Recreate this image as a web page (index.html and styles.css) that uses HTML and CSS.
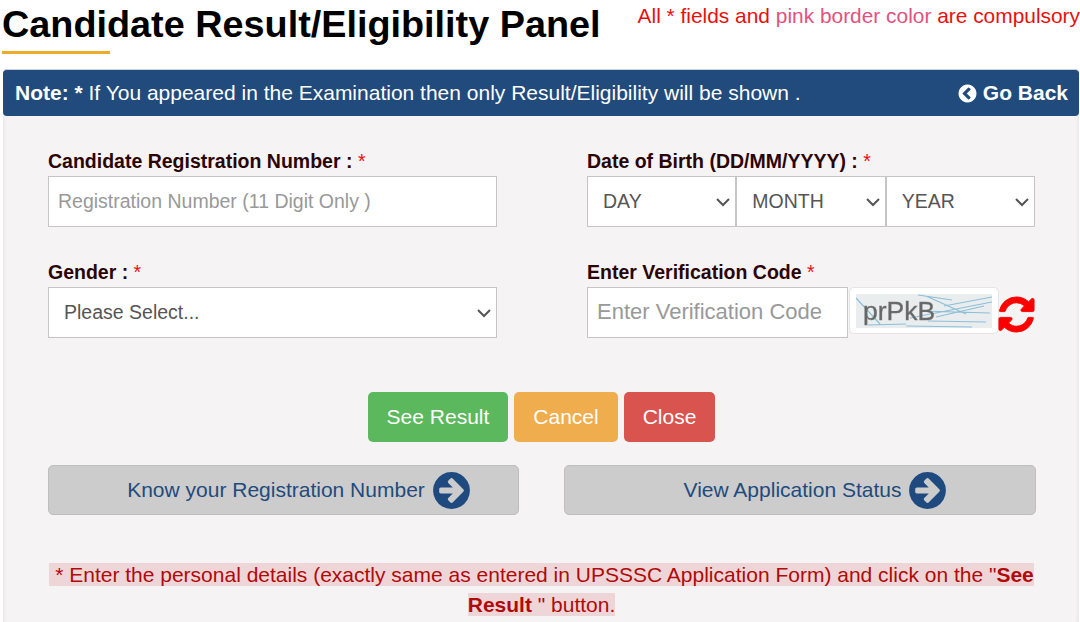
FILE: index.html
```html
<!DOCTYPE html>
<html>
<head>
    <title>Candidate Result/Eligibility Panel</title>
    <link rel="stylesheet" href="styles.css">
</head>
<body>
    <header class="page-head">
        <div class="title-block">
            <h1>Candidate Result/Eligibility Panel</h1>
            <div class="title-line"></div>
        </div>
        <p class="compulsory">All * fields and <span class="pink">pink border color</span> are compulsory</p>
    </header>

    <main class="panel">
        <div class="panel-head">
            <p><b>Note: *</b> If You appeared in the Examination then only Result/Eligibility will be shown .</p>
            <a href="#" class="go-back">
                <svg class="back-icon" viewBox="0 0 1792 1792"><path d="M1037 1395l102-102q19-19 19-45t-19-45l-307-307 307-307q19-19 19-45t-19-45l-102-102q-19-19-45-19t-45 19l-454 454q-19 19-19 45t19 45l454 454q19 19 45 19t45-19zm627-499q0 209-103 385.5t-279.5 279.5-385.5 103-385.5-103-279.5-279.5-103-385.5 103-385.5 279.5-279.5 385.5-103 385.5 103 279.5 279.5 103 385.5z"/></svg>
                Go Back
            </a>
        </div>

        <div class="panel-body">
            <div class="form-grid">
                <div class="field">
                    <label>Candidate Registration Number : <span class="req">*</span></label>
                    <input type="text" class="control" placeholder="Registration Number (11 Digit Only )">
                </div>
                <div class="field">
                    <label>Date of Birth (DD/MM/YYYY) : <span class="req">*</span></label>
                    <div class="dob">
                        <select class="control"><option>DAY</option></select>
                        <select class="control"><option>MONTH</option></select>
                        <select class="control"><option>YEAR</option></select>
                    </div>
                </div>
                <div class="field">
                    <label>Gender : <span class="req">*</span></label>
                    <select class="control"><option>Please Select...</option></select>
                </div>
                <div class="field">
                    <label>Enter Verification Code <span class="req">*</span></label>
                    <div class="captcha-row">
                        <input type="text" class="control code-input" placeholder="Enter Verification Code">
                        <div class="captcha">
                            <svg class="captcha-img" viewBox="0 0 136 34">
                                <rect width="136" height="34" fill="#e9edee"/>
                                <g stroke="#8dbfd8" stroke-width="1.2" fill="none">
                                    <path d="M0 4L24 30M62 1L96 6M54 24L136 8M50 32L116 33M72 27L130 28M88 12L136 3M66 17L134 19M80 23L128 12M70 2L110 20M12 31L50 30"/>
                                </g>
                                <text x="7" y="26" class="captcha-text">prPkB</text>
                            </svg>
                        </div>
                        <svg class="refresh" viewBox="0 0 1792 1792"><path d="M1639 1056q0 5-1 7-64 268-268 434.5t-478 166.5q-146 0-282.5-55t-243.5-157l-129 129q-19 19-45 19t-45-19-19-45v-448q0-26 19-45t45-19h448q26 0 45 19t19 45-19 45l-137 137q71 66 161 102t187 36q134 0 250-65t186-179q11-17 53-117 8-23 30-23h192q13 0 22.5 9.5t9.5 22.5zm25-800v448q0 26-19 45t-45 19h-448q-26 0-45-19t-19-45 19-45l138-138q-148-137-349-137-134 0-250 65t-186 179q-11 17-53 117-8 23-30 23h-199q-13 0-22.5-9.5t-9.5-22.5v-7q65-268 270-434.5t480-166.5q146 0 284 55.5t245 156.5l130-129q19-19 45-19t45 19 19 45z"/></svg>
                    </div>
                </div>
            </div>

            <div class="actions">
                <button class="btn btn-green">See Result</button>
                <button class="btn btn-orange">Cancel</button>
                <button class="btn btn-red">Close</button>
            </div>

            <div class="links">
                <a href="#" class="link-btn">Know your Registration Number
                    <svg class="arrow" viewBox="0 0 1792 1792"><path d="M1413 896q0-27-18-45l-91-91-362-362q-18-18-45-18t-45 18l-91 91q-18 18-18 45t18 45l189 189h-502q-26 0-45 19t-19 45v128q0 26 19 45t45 19h502l-189 189q-19 19-19 45t19 45l91 91q18 18 45 18t45-18l362-362 91-91q18-18 18-45zm251 0q0 209-103 385.5t-279.5 279.5-385.5 103-385.5-103-279.5-279.5-103-385.5 103-385.5 279.5-279.5 385.5-103 385.5 103 279.5 279.5 103 385.5z"/></svg>
                </a>
                <a href="#" class="link-btn">View Application Status
                    <svg class="arrow" viewBox="0 0 1792 1792"><path d="M1413 896q0-27-18-45l-91-91-362-362q-18-18-45-18t-45 18l-91 91q-18 18-18 45t18 45l189 189h-502q-26 0-45 19t-19 45v128q0 26 19 45t45 19h502l-189 189q-19 19-19 45t19 45l91 91q18 18 45 18t45-18l362-362 91-91q18-18 18-45zm251 0q0 209-103 385.5t-279.5 279.5-385.5 103-385.5-103-279.5-279.5-103-385.5 103-385.5 279.5-279.5 385.5-103 385.5 103 279.5 279.5 103 385.5z"/></svg>
                </a>
            </div>

            <p class="hint"><span>* Enter the personal details (exactly same as entered in UPSSSC Application Form) and click on the "<b>See</b> <b>Result</b> " button.</span></p>
        </div>
    </main>
</body>
</html>
```

FILE: styles.css
```css
* {
    box-sizing: border-box;
    margin: 0;
    padding: 0;
}

html, body {
    height: 622px;
    overflow: hidden;
}

body {
    font-family: "Liberation Sans", Arial, sans-serif;
    background-color: #fff;
    width: 1080px;
}

.page-head {
    display: flex;
    justify-content: space-between;
    height: 69px;
    padding-left: 2px;
}

h1 {
    font-size: 37.8px;
    line-height: 41px;
    color: #000;
    padding-top: 4px;
    white-space: nowrap;
}

.title-line {
    width: 108px;
    height: 3px;
    margin-top: 6px;
    background-color: #edab2b;
}

.compulsory {
    font-size: 20.9px;
    line-height: 24px;
    color: #e8100f;
    padding-top: 4px;
    white-space: nowrap;
}

.pink {
    color: #e2527f;
}

.panel {
    margin-left: 3px;
    margin-right: 1px;
    background-color: #f5f3f4;
    height: 553px;
    overflow: hidden;
    border-radius: 4px 4px 0 0;
    box-shadow: inset 4px 0 4px -3px rgba(0, 0, 0, 0.06), inset -4px 0 4px -3px rgba(0, 0, 0, 0.06);
}

.panel-head {
    display: flex;
    justify-content: space-between;
    align-items: center;
    height: 47px;
    padding: 0 11px 0 12px;
    background-color: #214b7c;
    border-top: 1px solid #c5d0dc;
    border-radius: 4px;
    color: #fff;
    font-size: 21px;
}

.go-back {
    display: flex;
    align-items: center;
    gap: 5px;
    color: #fff;
    text-decoration: none;
    font-weight: bold;
    font-size: 21px;
}

.back-icon {
    width: 21px;
    height: 21px;
    fill: #fff;
}

.panel-body {
    padding: 34px 44px 0 45px;
}

.form-grid {
    display: grid;
    grid-template-columns: 449px 448px;
    column-gap: 90px;
    row-gap: 34px;
}

.field label {
    display: block;
    font-size: 19.5px;
    font-weight: bold;
    line-height: 23px;
    margin-bottom: 3px;
    color: #2b0505;
    white-space: nowrap;
}

.field .req {
    color: #e8100f;
    font-weight: normal;
}

.control {
    display: block;
    width: 100%;
    height: 51px;
    padding: 0 9px;
    border: 1px solid #c6c4c5;
    background-color: #fff;
    font-family: inherit;
    font-size: 19.5px;
    color: #555;
}

.control::placeholder {
    color: #999;
}

select.control {
    padding-left: 15px;
    padding-bottom: 2px;
    appearance: none;
    background-image: url("data:image/svg+xml,%3Csvg xmlns='http://www.w3.org/2000/svg' width='16' height='10' viewBox='0 0 16 10'%3E%3Cpath d='M2 2l6 6 6-6' fill='none' stroke='%23555' stroke-width='2'/%3E%3C/svg%3E");
    background-repeat: no-repeat;
    background-position: right 4px center;
}

.dob {
    display: flex;
}

.dob .control {
    flex: 1;
    min-width: 0;
}

.captcha-row {
    display: flex;
    align-items: flex-start;
}

.captcha-row .code-input {
    width: 261px;
    flex-shrink: 0;
    font-size: 22px;
    padding-bottom: 2px;
}

.captcha {
    flex-shrink: 0;
    width: 150px;
    height: 47px;
    margin-left: 1px;
    padding: 6px;
    background-color: #fff;
    border: 1px solid #e6e4e5;
    border-radius: 5px;
}

.captcha-img {
    display: block;
    width: 136px;
    height: 34px;
}

.captcha-text {
    font-family: "Liberation Sans", Arial, sans-serif;
    font-size: 26.5px;
    fill: #666;
    stroke: #777;
    stroke-width: 0.4px;
    filter: blur(0.4px);
}

.refresh {
    flex-shrink: 0;
    width: 41px;
    height: 41px;
    margin-top: 7px;
    margin-left: -3px;
    fill: #fb0000;
    stroke: #fb0000;
    stroke-width: 40;
}

.actions {
    display: flex;
    justify-content: center;
    gap: 6px;
    margin-top: 54px;
}

.btn {
    height: 50px;
    padding: 0 18.5px;
    border: none;
    border-radius: 5px;
    color: #fff;
    font-family: inherit;
    font-size: 21px;
}

.btn-green {
    background-color: #5cb85c;
}

.btn-orange {
    background-color: #f0ad4e;
    padding: 0 19.5px;
}

.btn-red {
    background-color: #d9534f;
}

.links {
    display: grid;
    grid-template-columns: 471px 472px;
    column-gap: 45px;
    margin-top: 23px;
}

.link-btn {
    display: flex;
    align-items: center;
    justify-content: center;
    gap: 5px;
    height: 50px;
    padding-left: 33px;
    background-color: #cdcccd;
    border: 1px solid #bfbebf;
    border-radius: 5px;
    color: #214b7c;
    font-size: 21px;
    text-decoration: none;
}

.arrow {
    width: 43px;
    height: 43px;
    fill: #1e4a80;
}

.hint {
    margin-top: 45px;
    text-align: center;
    font-size: 21px;
    line-height: 30px;
    color: #b00a0a;
}

.hint span {
    background-color: #eed6d8;
    padding-left: 6px;
}
```
